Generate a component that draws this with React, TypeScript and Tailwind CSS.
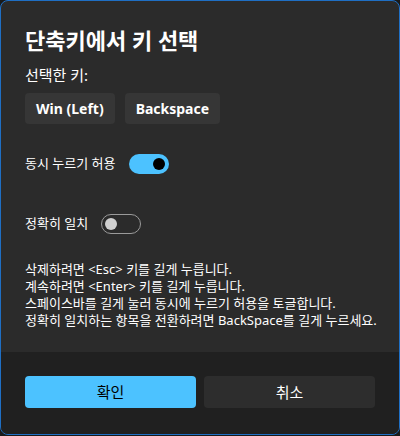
import React from "react";

const font = { fontFamily: '"Segoe UI", "Noto Sans", "Noto Sans CJK KR", sans-serif' };

function Toggle({ on }: { on: boolean }) {
  return on ? (
    <div className="w-[40px] h-[20px] rounded-full bg-[#4cc2ff] flex items-center justify-end pr-[4px]">
      <div className="w-[12px] h-[12px] rounded-full bg-black" />
    </div>
  ) : (
    <div className="w-[40px] h-[20px] rounded-full border border-[#9a9a9a] flex items-center pl-[3px]">
      <div className="w-[12px] h-[12px] rounded-full bg-[#d0d0d0]" />
    </div>
  );
}

export default function App() {
  return (
    <div className="w-[400px] h-[436px] bg-[#1a1a1a]" style={font}>
      <div className="w-[400px] h-[435px] border border-[#1f6fc4] rounded-[8px] overflow-hidden flex flex-col bg-[#2b2b2b] text-white">
        <div className="flex-1 px-[24px] pt-[25px] flex flex-col items-start">
          <div className="text-[22px] leading-[28px] font-bold">단축키에서 키 선택</div>
          <div className="mt-[11px] text-[15px] leading-[20px]">선택한 키:</div>
          <div className="mt-[8px] flex gap-[10px]">
            <div className="h-[31px] px-[11px] rounded-[4px] bg-[#363636] flex items-center text-[14px] font-bold">Win (Left)</div>
            <div className="h-[31px] px-[11px] rounded-[4px] bg-[#363636] flex items-center text-[14px] font-bold">Backspace</div>
          </div>
          <div className="mt-[30px] h-[20px] flex items-center gap-[14px] text-[13px]">
            <span>동시 누르기 허용</span>
            <Toggle on />
          </div>
          <div className="mt-[40px] h-[20px] flex items-center gap-[13px] text-[13px]">
            <span>정확히 일치</span>
            <Toggle on={false} />
          </div>
          <div className="mt-[27px] text-[13px] leading-[17px] whitespace-nowrap">
            <div>삭제하려면 &lt;Esc&gt; 키를 길게 누릅니다.</div>
            <div>계속하려면 &lt;Enter&gt; 키를 길게 누릅니다.</div>
            <div>스페이스바를 길게 눌러 동시에 누르기 허용을 토글합니다.</div>
            <div>정확히 일치하는 항목을 전환하려면 BackSpace를 길게 누르세요.</div>
          </div>
        </div>
        <div className="h-[82px] bg-[#202020] px-[24px] pt-[24px] flex gap-[8px]">
          <div className="flex-1 h-[32px] rounded-[4px] bg-[#4cc2ff] text-black text-[15px] flex items-center justify-center">확인</div>
          <div className="flex-1 h-[32px] rounded-[4px] bg-[#2d2d2d] text-white text-[15px] flex items-center justify-center">취소</div>
        </div>
      </div>
    </div>
  );
}
